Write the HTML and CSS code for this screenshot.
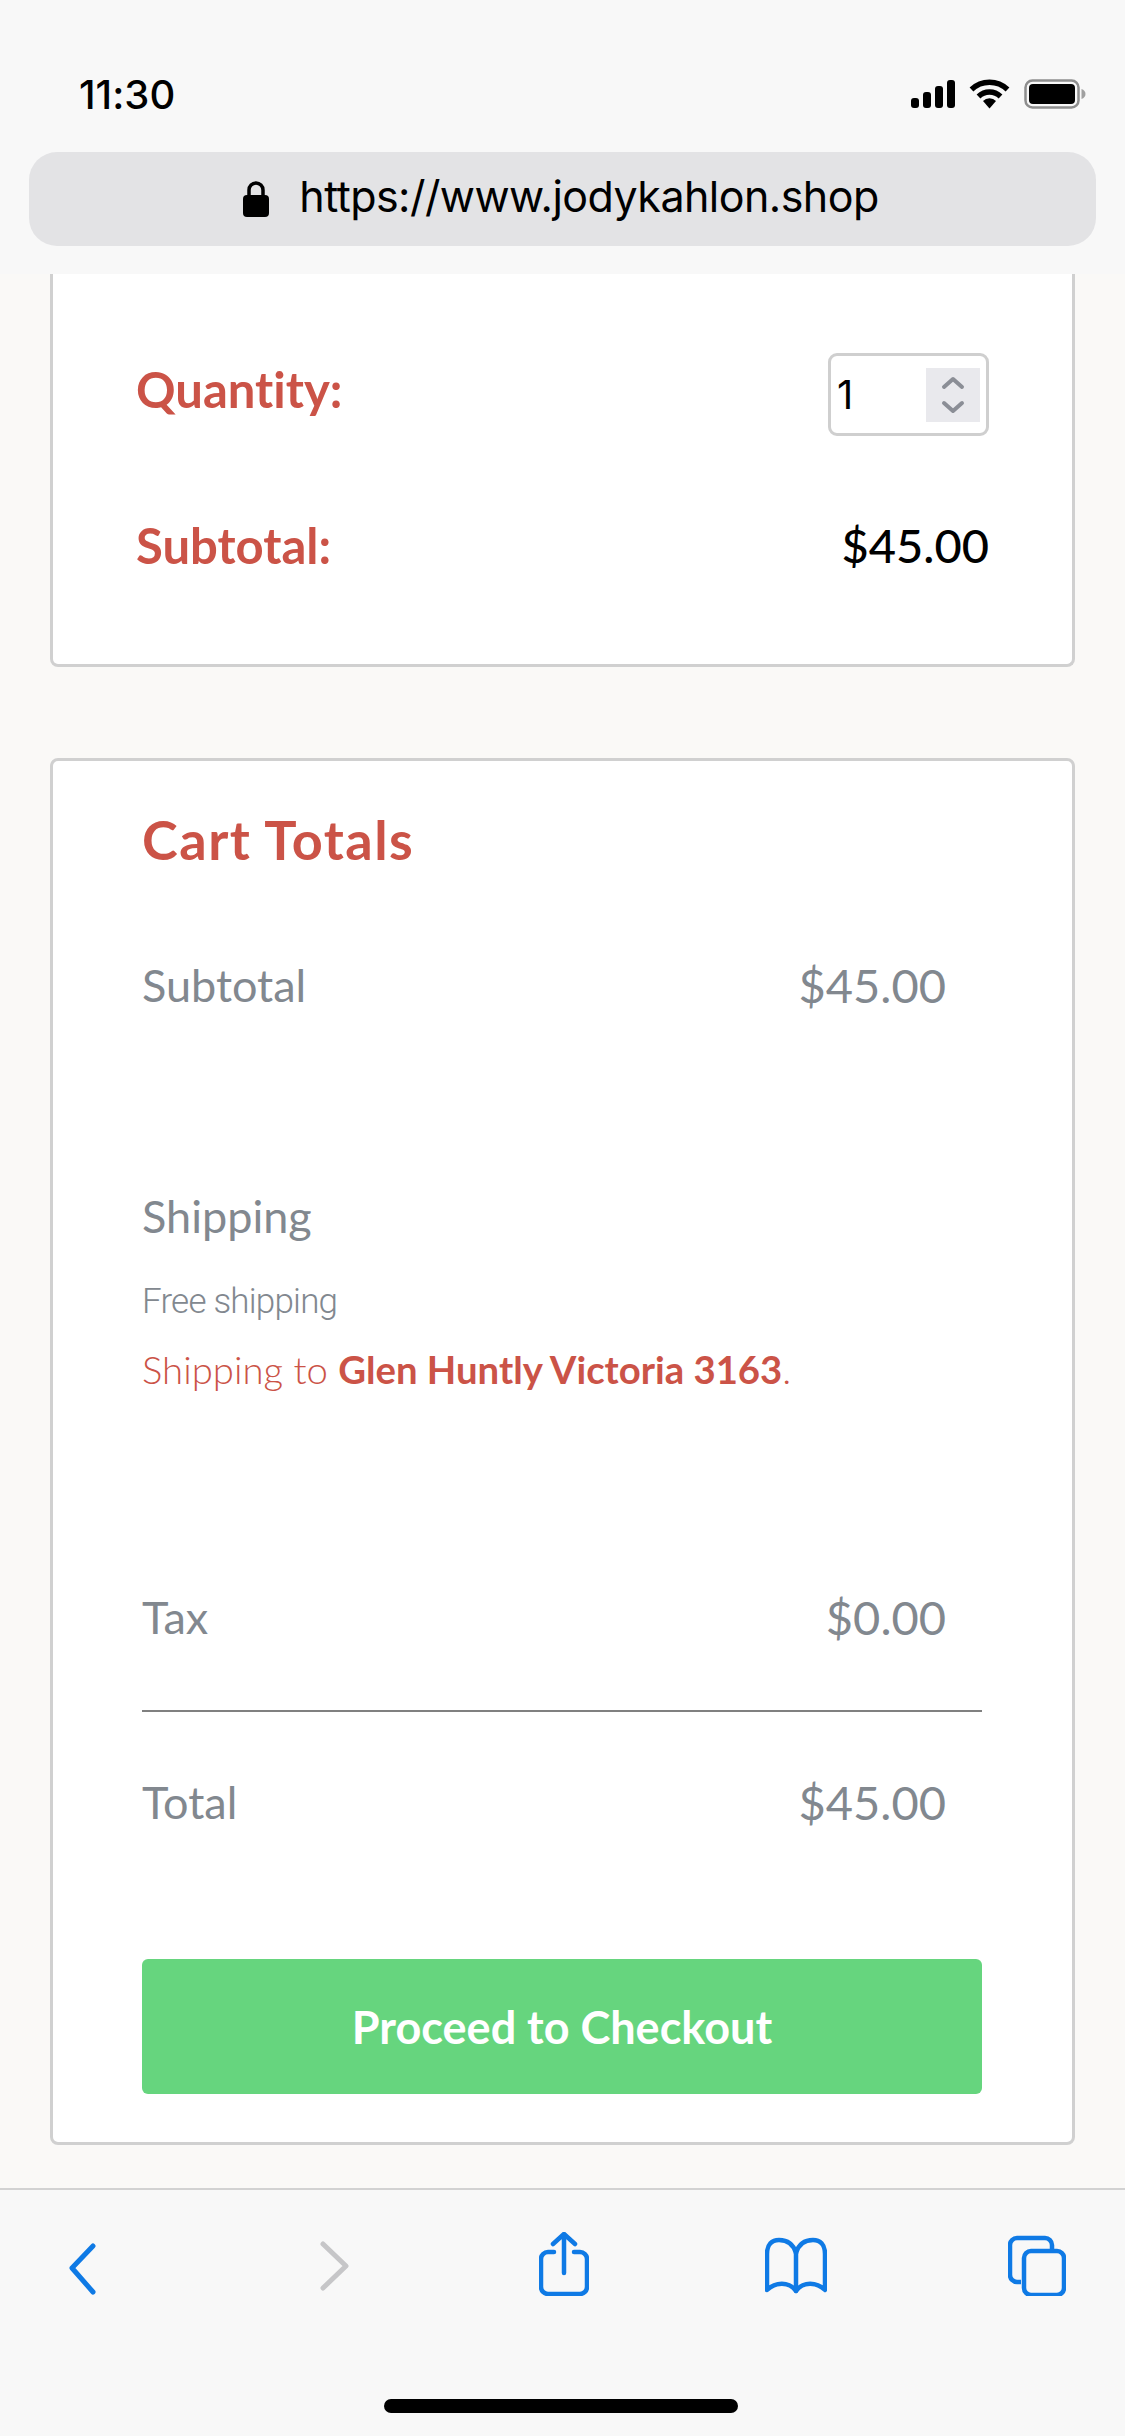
FILE: index.html
```html
<!DOCTYPE html>
<html lang="en">
<head>
    <meta charset="UTF-8">
    <meta name="viewport" content="width=device-width, initial-scale=1.0">
    <title>Cart</title>
    <link rel="stylesheet" href="styles.css">
</head>
<body>
    <header class="browser-top">
        <div class="status-bar">
            <span class="time">11:30</span>
            <div class="status-icons">
                <svg class="signal" width="44" height="28" viewBox="0 0 44 28">
                    <rect x="0" y="18" width="8" height="10" rx="3"/>
                    <rect x="12" y="12" width="8" height="16" rx="3"/>
                    <rect x="24" y="6" width="8" height="22" rx="3"/>
                    <rect x="36" y="0" width="8" height="28" rx="3"/>
                </svg>
                <svg class="wifi" width="41" height="30" viewBox="0 0 41 30">
                    <path d="M2.500 10.500a26 26 0 0 1 36 0" fill="none" stroke="#000" stroke-width="5.500"/>
                    <path d="M9.500 17.500a16 16 0 0 1 22 0" fill="none" stroke="#000" stroke-width="5.500"/>
                    <path d="M14 22a9 9 0 0 1 13 0l-6.500 7.500z"/>
                </svg>
                <svg class="battery" width="62" height="30" viewBox="0 0 62 30">
                    <rect x="1.500" y="1.500" width="53" height="27" rx="7" fill="none" stroke="#8e8e8e" stroke-width="2.500"/>
                    <rect x="5" y="5" width="46" height="20" rx="4"/>
                    <path d="M57.500 10c2.500 .8 4 2.700 4 5s-1.500 4.200-4 5z" fill="#a0a0a0"/>
                </svg>
            </div>
        </div>
        <div class="url-bar">
            <svg class="lock" width="26" height="36" viewBox="0 0 26 36">
                <path d="M6 16V9a7 7 0 0 1 14 0v7" fill="none" stroke="#000" stroke-width="3.500"/>
                <rect x="0" y="14" width="26" height="22" rx="4"/>
            </svg>
            <span class="url-text">https://www.jodykahlon.shop</span>
        </div>
    </header>

    <main class="page">
        <section class="card card-item">
            <div class="item-row item-row-qty">
                <span class="item-label">Quantity:</span>
                <div class="qty-input">
                    <span class="qty-value">1</span>
                    <div class="qty-spin">
                        <svg width="26" height="40" viewBox="0 0 26 40" fill="none" stroke="#8b8e96" stroke-width="4" stroke-linecap="round" stroke-linejoin="round">
                            <path d="M4 12l9-8 9 8"/>
                            <path d="M4 28l9 8 9-8"/>
                        </svg>
                    </div>
                </div>
            </div>
            <div class="item-row item-row-sub">
                <span class="item-label">Subtotal:</span>
                <span class="item-price">$45.00</span>
            </div>
        </section>

        <section class="card card-totals">
            <h2 class="totals-title">Cart Totals</h2>
            <div class="totals-row row-subtotal">
                <span>Subtotal</span>
                <span class="amount">$45.00</span>
            </div>
            <div class="shipping">
                <div class="totals-row">Shipping</div>
                <p class="ship-method">Free shipping</p>
                <p class="ship-dest">Shipping to <strong>Glen Huntly Victoria 3163</strong>.</p>
            </div>
            <div class="totals-row row-tax">
                <span>Tax</span>
                <span class="amount">$0.00</span>
            </div>
            <div class="totals-row row-total">
                <span>Total</span>
                <span class="amount">$45.00</span>
            </div>
            <a class="checkout" href="#">Proceed to Checkout</a>
        </section>
    </main>

    <footer class="toolbar">
        <div class="tool-icons">
            <svg class="tool-back" width="27" height="64" viewBox="0 0 27 64" fill="none" stroke="#0f7ae5" stroke-width="5" stroke-linecap="round" stroke-linejoin="round">
                <path d="M24 14L3 36l21 24"/>
            </svg>
            <svg class="tool-forward" width="29" height="64" viewBox="0 0 29 64" fill="none" stroke="#c6c6c8" stroke-width="5" stroke-linecap="round" stroke-linejoin="round">
                <path d="M3 12l23 22L3 56"/>
            </svg>
            <svg class="tool-share" width="50" height="64" viewBox="0 0 50 64" fill="none" stroke="#0f7ae5" stroke-width="4.500" stroke-linecap="round" stroke-linejoin="round">
                <path d="M15 20H9a7 7 0 0 0-7 7v28a7 7 0 0 0 7 7h32a7 7 0 0 0 7-7V27a7 7 0 0 0-7-7h-6"/>
                <path d="M25 41V2M14 12L25 2l11 10"/>
            </svg>
            <svg class="tool-book" width="62" height="64" viewBox="0 0 62 64" fill="none" stroke="#0f7ae5" stroke-width="4.500" stroke-linecap="round" stroke-linejoin="round">
                <path d="M31 21C28 11 21 8 14 8S2 12 2 22v36c8-8 22-9 29 1 7-10 21-9 29-1V22c0-10-5-14-12-14S34 11 31 21z"/>
                <path d="M31 21v38"/>
            </svg>
            <svg class="tool-tabs" width="58" height="64" viewBox="0 0 58 64" fill="none" stroke="#0f7ae5" stroke-width="4.500" stroke-linejoin="round">
                <path d="M13 50H9a7 7 0 0 1-7-7V13a7 7 0 0 1 7-7h28a7 7 0 0 1 7 7v5"/>
                <rect x="16" y="19" width="40" height="44" rx="7"/>
            </svg>
        </div>
        <div class="home-bar"></div>
    </footer>
</body>
</html>
```

FILE: styles.css
```css
* {
    box-sizing: border-box;
}
body {
    margin: 0;
    width: 1125px;
    height: 2436px;
    overflow: hidden;
    display: flex;
    flex-direction: column;
    font-family: Lato, Arial, sans-serif;
    font-variant-ligatures: none;
    background-color: #faf9f7;
}

/* browser chrome */
.browser-top {
    height: 274px;
    padding: 79px 29px 0;
    background-color: #f8f8f8;
}
.status-bar {
    display: flex;
    justify-content: space-between;
    align-items: center;
    height: 30px;
    padding-left: 50px;
    padding-right: 10px;
}
.time {
    font-family: Inter, sans-serif;
    font-size: 40px;
    font-weight: 500;
    color: #000;
}
.status-icons {
    display: flex;
    align-items: center;
    gap: 14px;
}
.url-bar {
    display: flex;
    align-items: center;
    justify-content: center;
    gap: 30px;
    height: 94px;
    margin-top: 43px;
    padding-right: 3px;
    background-color: #e3e3e5;
    border-radius: 28px;
}
.url-text {
    padding-bottom: 6px;
    font-family: Inter, sans-serif;
    font-size: 43px;
    letter-spacing: -0.55px;
    color: #000;
}

/* page content */
.page {
    flex: 1;
    padding: 0 50px;
}
.card {
    background-color: #fff;
    border: 3px solid #d0d0d0;
    border-radius: 8px;
}
.card-item {
    height: 393px;
    border-top: 0;
    border-top-left-radius: 0;
    border-top-right-radius: 0;
    padding: 79px 83px 0 83px;
}
.item-row {
    display: flex;
    justify-content: space-between;
    align-items: center;
}
.item-row-qty {
    height: 83px;
}
.item-row-sub {
    margin-top: 86px;
    height: 46px;
}
.item-label {
    font-size: 49px;
    font-weight: 700;
    color: #cb5347;
}
.item-row-qty .item-label {
    padding-bottom: 12px;
}
.item-price {
    font-size: 47px;
    font-weight: 500;
    color: #000;
}
.qty-input {
    display: flex;
    justify-content: space-between;
    align-items: center;
    width: 161px;
    height: 83px;
    padding: 0 6px 0 6px;
    border: 3px solid #cfcfcf;
    border-radius: 9px;
}
.qty-value {
    font-family: Inter, sans-serif;
    font-size: 40px;
    color: #000;
}
.qty-spin {
    display: flex;
    align-items: center;
    justify-content: center;
    width: 54px;
    height: 54px;
    background-color: #e9e9ed;
}

.card-totals {
    height: 1387px;
    margin-top: 91px;
    padding: 0 90px 0 89px;
}
.totals-title {
    margin: 49px 0 0;
    font-size: 54px;
    line-height: 60px;
    font-weight: 700;
    letter-spacing: 1.5px;
    color: #cb5347;
}
.totals-row {
    display: flex;
    justify-content: space-between;
    padding-right: 36px;
    font-size: 45px;
    line-height: 50px;
    color: #82888f;
}
.amount {
    font-size: 47px;
}
.row-subtotal {
    margin-top: 90px;
}
.shipping {
    margin-top: 181px;
}
.ship-method {
    margin: 40px 0 0;
    font-family: Roboto, sans-serif;
    font-size: 35px;
    font-weight: 300;
    letter-spacing: -0.8px;
    line-height: 42px;
    color: #82888f;
}
.ship-dest {
    margin: 24px 0 0;
    font-size: 38.3px;
    line-height: 44px;
    font-weight: 300;
    color: #cb5347;
}
.ship-dest strong {
    font-weight: 700;
}
.row-tax {
    margin-top: 201px;
}
.row-total {
    margin-top: 68px;
    padding-top: 65px;
    border-top: 2px solid #808080;
}
.checkout {
    display: flex;
    align-items: center;
    justify-content: center;
    height: 135px;
    margin-top: 132px;
    background-color: #66d57e;
    border-radius: 6px;
    font-size: 45px;
    font-weight: 700;
    color: #fff;
    text-decoration: none;
}

/* bottom toolbar */
.toolbar {
    height: 248px;
    padding-top: 42px;
    background-color: #f8f8f8;
    border-top: 2px solid #d2d2d2;
}
.tool-icons {
    display: flex;
    align-items: flex-start;
}
.tool-back {
    margin-left: 69px;
}
.tool-forward {
    margin-left: 224px;
}
.tool-share {
    margin-left: 190px;
}
.tool-book {
    margin-left: 176px;
}
.tool-tabs {
    margin-left: 181px;
}
.home-bar {
    width: 354px;
    height: 14px;
    margin: 103px 0 0 384px;
    background-color: #000;
    border-radius: 7px;
}
```
